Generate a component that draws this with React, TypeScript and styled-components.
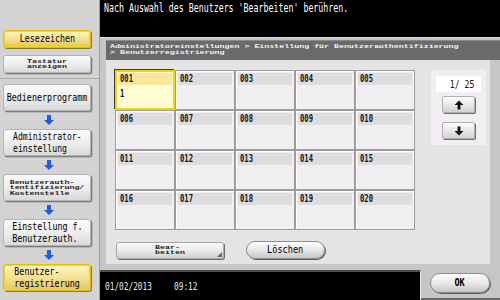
import styled, { createGlobalStyle } from "styled-components";

const GlobalStyle = createGlobalStyle`
  html, body {
    margin: 0;
    padding: 0;
    background: #000;
  }
`;

const MONO = `"DejaVu Sans Mono", "Liberation Mono", monospace`;
const SMALL = `"Liberation Mono", "DejaVu Sans Mono", monospace`;

const Screen = styled.div`
  width: 500px;
  height: 300px;
  display: flex;
  overflow: hidden;
  font-family: ${MONO};
`;

/* ---------- sidebar ---------- */

const Sidebar = styled.div`
  width: 99px;
  display: flex;
  flex-direction: column;
  background: #d3d3d3;
  border-right: 1px solid #9c9c9c;
`;

const SidebarTop = styled.div`
  height: 79px;
  padding-top: 30px;
  box-sizing: border-box;
  display: flex;
  flex-direction: column;
  align-items: center;
  gap: 7px;
  border-bottom: 1px solid #a8a8a8;
`;

const Flow = styled.div`
  padding-top: 5px;
  display: flex;
  flex-direction: column;
  align-items: center;
`;

const SideButton = styled.div<{ $active?: boolean; $h?: number }>`
  width: 88px;
  height: ${({ $h }) => $h ?? 27}px;
  box-sizing: border-box;
  margin-left: -5px;
  display: flex;
  align-items: center;
  justify-content: center;
  border-radius: 3px;
  color: #000;
  border: 1px solid ${({ $active }) => ($active ? "#e6bf00" : "#b4b4b4")};
  background: ${({ $active }) =>
    $active
      ? "linear-gradient(#fff7c4, #f3e08c 55%, #e2c265)"
      : "linear-gradient(#fbfbfb, #ececec 55%, #d9d9d9)"};
  box-shadow: ${({ $active }) =>
    $active
      ? "inset 0 0 0 1px #f7d51a, 1px 1px 0 #8a7a30"
      : "1px 1px 0 #7c7c7c, 2px 2px 0 #b8b8b8"};
`;

const Squeeze = styled.span<{ $x?: number; $left?: boolean; $bold?: boolean }>`
  display: inline-block;
  white-space: pre;
  font-weight: ${({ $bold }) => ($bold ? "bold" : "normal")};
  text-align: ${({ $left }) => ($left ? "left" : "center")};
  transform: scaleX(${({ $x }) => $x ?? 0.76});
  transform-origin: ${({ $left }) => ($left ? "left" : "center")};
`;

const BigLabel = styled(Squeeze)`
  font-size: 11px;
  line-height: 12px;
`;

// tiny wide pixel-like text: squashed vertically
const SmallLabel = styled.span<{ $left?: boolean }>`
  display: inline-block;
  white-space: pre;
  text-align: ${({ $left }) => ($left ? "left" : "center")};
  font-family: ${SMALL};
  font-weight: bold;
  font-size: 8.3px;
  line-height: 8px;
  color: #1a1a1a;
  transform: scaleY(0.72);
`;

const ArrowSlot = styled.div`
  height: 18px;
  display: flex;
  align-items: center;
  justify-content: center;
  margin-left: -1px;
`;

function FlowArrow() {
  return (
    <ArrowSlot>
      <svg width="10" height="10" viewBox="0 0 10 10">
        <path d="M3 0h4v5h3l-5 5-5-5h3z" fill="#1f5be6" />
      </svg>
    </ArrowSlot>
  );
}

/* ---------- main ---------- */

const Main = styled.div`
  flex: 1;
  display: flex;
  flex-direction: column;
`;

const MessageBar = styled.div`
  height: 37px;
  box-sizing: border-box;
  padding: 2px 0 0 4px;
  background: #000;
  color: #fff;
  font-size: 11.5px;
  line-height: 13px;
`;

const Panel = styled.div`
  flex: 1;
  display: flex;
  flex-direction: column;
  padding: 2px 0 6px 6px;
  background: #c6c6c6;
  border-top: 1px solid #d8d8d8;
`;

const Crumbs = styled.div`
  height: 20px;
  box-sizing: border-box;
  padding: 2px 0 0 4px;
  background: #6a6a6a;
  border-top: 1px solid #8a8a8a;
`;

const CrumbText = styled(SmallLabel)`
  color: #f4f4f4;
  transform-origin: top left;
`;

const Content = styled.div`
  flex: 1;
  margin-right: 10px;
  padding: 10px 0 0 9px;
  background: #e5e3e5;
`;

const TopRow = styled.div`
  display: flex;
  align-items: flex-start;
`;

const Grid = styled.div`
  display: grid;
  grid-template-columns: repeat(5, 60px);
  grid-template-rows: repeat(4, 40px);
  background: #f7f7f7;
`;

const Cell = styled.div<{ $selected?: boolean }>`
  box-sizing: border-box;
  padding: ${({ $selected }) => ($selected ? "1px 1px 0" : "2px 2px 0")};
  border: ${({ $selected }) =>
    $selected ? "2px solid #f2d310" : "1px solid #9c9c9c"};
  background: ${({ $selected }) => ($selected ? "#fffdd2" : "#f1eff1")};
  box-shadow: ${({ $selected }) =>
    $selected ? "-1px -1px 0 #3a3a3a" : "inset 1px 1px 0 #ffffff"};
  font-size: 10px;
  line-height: 12px;
  color: #111;
`;

const CellHead = styled.div<{ $selected?: boolean }>`
  height: 12px;
  padding-left: 2px;
  background: ${({ $selected }) => ($selected ? "#fbe79c" : "#dedcde")};
`;

const CellBody = styled.div`
  padding: 3px 0 0 2px;
`;

const Nav = styled.div`
  width: 55px;
  height: 75px;
  margin-left: 16px;
  box-sizing: border-box;
  padding: 6px 0 0 5px;
  background: #f3eef3;
  display: flex;
  flex-direction: column;
`;

const PageBox = styled.div`
  width: 45px;
  height: 16px;
  box-sizing: border-box;
  padding-right: 4px;
  background: #fff;
  display: flex;
  align-items: center;
  justify-content: flex-end;
  font-size: 10px;
  color: #111;
`;

const ScrollButton = styled.div<{ $gap: number }>`
  width: 33px;
  height: 17px;
  margin: ${({ $gap }) => $gap}px 0 0 6px;
  box-sizing: border-box;
  display: flex;
  align-items: center;
  justify-content: center;
  border: 1px solid #b0b0b0;
  border-radius: 2px;
  background: linear-gradient(#fbfbfb, #e6e6e6 55%, #d2d2d2);
  box-shadow: 1px 1px 0 #6e6e6e;
`;

const ButtonRow = styled.div`
  display: flex;
  align-items: center;
  gap: 22px;
  margin-top: 11px;
  padding-left: 1px;
`;

const EditButton = styled.div`
  position: relative;
  width: 108px;
  height: 17px;
  box-sizing: border-box;
  display: flex;
  align-items: center;
  justify-content: center;
  border: 1px solid #a8a8a8;
  border-radius: 3px;
  background: linear-gradient(#fafafa, #e8e8e8 55%, #d0d0d0);
  box-shadow: 1px 1px 0 #6c6c6c;
`;

const CornerMark = styled.span`
  position: absolute;
  right: 1px;
  bottom: 1px;
  width: 0;
  height: 0;
  border-left: 5px solid transparent;
  border-bottom: 5px solid #6a6a6a;
`;

const PillButton = styled.div<{ $w: number; $h: number }>`
  width: ${({ $w }) => $w}px;
  height: ${({ $h }) => $h}px;
  box-sizing: border-box;
  display: flex;
  align-items: center;
  justify-content: center;
  border: 1px solid #8c8c8c;
  border-radius: ${({ $h }) => $h / 2}px;
  background: linear-gradient(#fdfdfd, #e8e8e8 50%, #c6c6c6);
  box-shadow: 1px 1px 0 #5c5c5c;
  color: #000;
`;

const Footer = styled.div`
  height: 30px;
  display: flex;
`;

const DateArea = styled.div`
  flex: 1;
  background: #000;
  border-top: 2px solid #4c4c4c;
  border-right: 1px solid #e6e6e6;
  color: #e8e8e8;
  display: flex;
  align-items: center;
  gap: 9px;
  padding: 0 0 0 5px;
  font-size: 10px;
`;

const OkTab = styled.div`
  width: 79px;
  box-sizing: border-box;
  padding: 3px 0 0 9px;
  background: #c6c6c6;
  border-bottom: 2px solid #6a6a6a;
  display: flex;
  align-items: flex-start;
`;

function ArrowIcon({ down }: { down?: boolean }) {
  return (
    <svg
      width="10"
      height="10"
      viewBox="0 0 10 10"
      style={down ? { transform: "rotate(180deg)" } : undefined}
    >
      <path d="M5 0.5 9.5 5H6.4v4.5H3.6V5H0.5z" fill="#111" />
    </svg>
  );
}

const cells = Array.from({ length: 20 }, (_, i) =>
  String(i + 1).padStart(3, "0")
);

export default function App() {
  return (
    <>
      <GlobalStyle />
      <Screen>
        <Sidebar>
          <SidebarTop>
            <SideButton $active $h={18}>
              <BigLabel>Lesezeichen</BigLabel>
            </SideButton>
            <SideButton $h={18}>
              <SmallLabel>{"Tastatur\nanzeigen"}</SmallLabel>
            </SideButton>
          </SidebarTop>
          <Flow>
            <SideButton>
              <BigLabel>Bedienerprogramm</BigLabel>
            </SideButton>
            <FlowArrow />
            <SideButton>
              <BigLabel $x={0.74}>{"Administrator-\neinstellung   "}</BigLabel>
            </SideButton>
            <FlowArrow />
            <SideButton>
              <SmallLabel $left>
                {"Benutzerauth-\ntentifizierung/\nKostenstelle"}
              </SmallLabel>
            </SideButton>
            <FlowArrow />
            <SideButton>
              <BigLabel>{"Einstellung f.\nBenutzerauth. "}</BigLabel>
            </SideButton>
            <FlowArrow />
            <SideButton $active>
              <BigLabel>{"Benutzer-    \nregistrierung"}</BigLabel>
            </SideButton>
          </Flow>
        </Sidebar>

        <Main>
          <MessageBar>
            <Squeeze $left $x={0.72}>
              Nach Auswahl des Benutzers 'Bearbeiten' berühren.
            </Squeeze>
          </MessageBar>

          <Panel>
            <Crumbs>
              <CrumbText $left>
                {
                  "Administratoreinstellungen > Einstellung für Benutzerauthentifizierung\n> Benutzerregistrierung"
                }
              </CrumbText>
            </Crumbs>
            <Content>
              <TopRow>
                <Grid>
                  {cells.map((c, i) => (
                    <Cell key={c} $selected={i === 0}>
                      <CellHead $selected={i === 0}>
                        <Squeeze $left $bold $x={0.72}>
                          {c}
                        </Squeeze>
                      </CellHead>
                      {i === 0 && (
                        <CellBody>
                          <Squeeze $left $bold $x={0.72}>
                            1
                          </Squeeze>
                        </CellBody>
                      )}
                    </Cell>
                  ))}
                </Grid>
                <Nav>
                  <PageBox>
                    <Squeeze $x={0.82}>1/ 25</Squeeze>
                  </PageBox>
                  <ScrollButton $gap={4}>
                    <ArrowIcon />
                  </ScrollButton>
                  <ScrollButton $gap={9}>
                    <ArrowIcon down />
                  </ScrollButton>
                </Nav>
              </TopRow>
              <ButtonRow>
                <EditButton>
                  <SmallLabel $left>{"Bear-\nbeiten"}</SmallLabel>
                  <CornerMark />
                </EditButton>
                <PillButton $w={79} $h={18}>
                  <BigLabel $x={0.78}>Löschen</BigLabel>
                </PillButton>
              </ButtonRow>
            </Content>
          </Panel>

          <Footer>
            <DateArea>
              <Squeeze $left $x={0.78}>
                01/02/2013
              </Squeeze>
              <Squeeze $left $x={0.78}>
                09:12
              </Squeeze>
            </DateArea>
            <OkTab>
              <PillButton $w={60} $h={20}>
                <BigLabel $bold $x={0.78}>
                  OK
                </BigLabel>
              </PillButton>
            </OkTab>
          </Footer>
        </Main>
      </Screen>
    </>
  );
}
